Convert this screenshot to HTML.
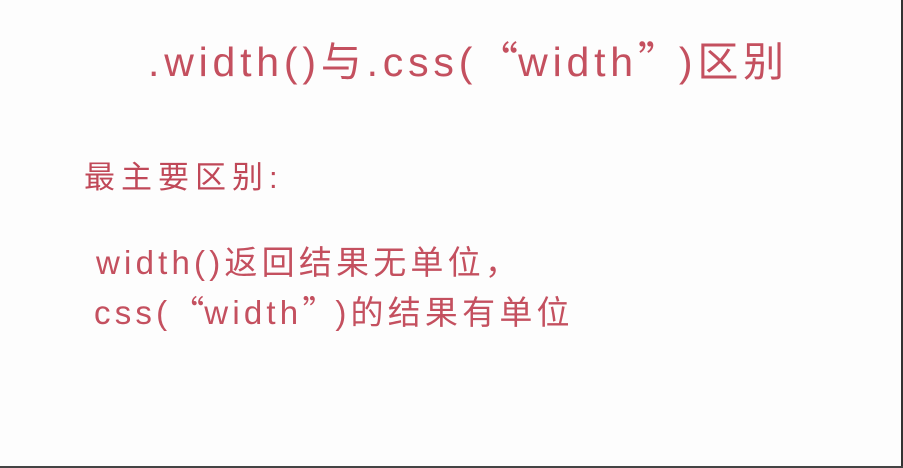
<!DOCTYPE html>
<html><head><meta charset="utf-8"><style>
body{margin:0;width:903px;height:468px;background:#fdfdfd;overflow:hidden;position:relative;font-family:"Liberation Sans","Noto Sans CJK SC",sans-serif;color:#c4505f}
.b{position:absolute;right:0;top:0;width:2px;height:468px;background:#333}
.bb{position:absolute;left:0;bottom:0;width:903px;height:2px;background:#444}
div.t{position:absolute;white-space:nowrap}
.ql,.qr,.c{display:inline-block;width:1em;font-family:"Noto Sans CJK SC",sans-serif}
.ql{text-align:right}.qr,.c{text-align:left}
</style></head><body>
<div class="t" style="left:148px;top:28px;font-size:41px;letter-spacing:4.8px">.width()与.css(<span class="ql">“</span>width<span class="qr">”</span>)区别</div>
<div class="t" style="left:84px;top:152px;font-size:31px;letter-spacing:6px;color:#c04858">最主要区别:</div>
<div class="t" style="left:96px;top:236px;font-size:33px;letter-spacing:4.2px">width()返回结果无单位<span class="c">，</span></div>
<div class="t" style="left:94px;top:286px;font-size:33px;letter-spacing:4.2px">css(<span class="ql">“</span>width<span class="qr">”</span>)的结果有单位</div>
<div class="b"></div><div class="bb"></div>
</body></html>
